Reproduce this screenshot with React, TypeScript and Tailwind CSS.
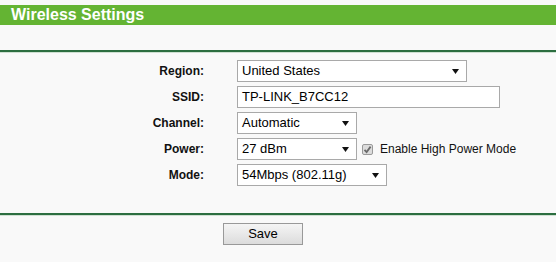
import React from "react";

const font = { fontFamily: '"Liberation Sans", Arial, sans-serif' };

function Arrow() {
  return (
    <svg width="7" height="5" viewBox="0 0 7 5" className="shrink-0">
      <polygon points="0,0 7,0 3.5,5" fill="#111" />
    </svg>
  );
}

function FakeSelect({ value, width }: { value: string; width: string }) {
  return (
    <div
      className={`flex h-[22px] ${width} items-center justify-between border border-[#a9a9a9] bg-white pl-[4px] pr-[7px] text-[13px] text-black`}
    >
      <span>{value}</span>
      <Arrow />
    </div>
  );
}

function Row({ label, children }: { label: string; children: React.ReactNode }) {
  return (
    <div className="flex h-[22px] items-center">
      <div className="w-[204px] text-right text-[12px] font-bold text-[#111]">{label}</div>
      <div className="ml-[33px] flex items-center">{children}</div>
    </div>
  );
}

export default function App() {
  return (
    <div className="h-[262px] w-[556px] overflow-hidden bg-[#f9f9f9] pt-[5px]" style={font}>
      <div className="flex h-[20px] items-center bg-[#64b433] pl-[11px] text-[16px] font-bold text-white">
        Wireless Settings
      </div>
      <div className="mt-[25px] h-[2px] bg-[#2c6e40]" />
      <div className="h-px bg-[#cfe0d2]" />

      <div className="mt-[7px] flex flex-col gap-[4px]">
        <Row label="Region:">
          <FakeSelect value="United States" width="w-[230px]" />
        </Row>
        <Row label="SSID:">
          <div className="flex h-[22px] w-[263px] items-center border border-[#a9a9a9] bg-white pl-[4px] text-[13px] text-black">
            TP-LINK_B7CC12
          </div>
        </Row>
        <Row label="Channel:">
          <FakeSelect value="Automatic" width="w-[120px]" />
        </Row>
        <Row label="Power:">
          <FakeSelect value="27 dBm" width="w-[120px]" />
          <div className="ml-[5px] flex h-[11px] w-[11px] items-center justify-center rounded-[2px] border border-[#9a9a9a] bg-[#dcdcdc]">
            <svg width="9" height="9" viewBox="0 0 9 9">
              <path d="M1.5 4.8 L3.6 7 L7.6 1.6" fill="none" stroke="#6a6a6a" strokeWidth="1.8" />
            </svg>
          </div>
          <span className="ml-[7px] text-[12px] text-[#111]">Enable High Power Mode</span>
        </Row>
        <Row label="Mode:">
          <FakeSelect value="54Mbps (802.11g)" width="w-[150px]" />
        </Row>
      </div>

      <div className="mt-[27px] h-[2px] bg-[#2c6e40]" />
      <div className="h-px bg-[#cfe0d2]" />

      <div className="mt-[7px] flex pl-[223px]">
        <button className="h-[22px] w-[80px] border border-[#999] bg-gradient-to-b from-[#f5f5f5] to-[#dcdcdc] text-[13px] text-black">
          Save
        </button>
      </div>
    </div>
  );
}
